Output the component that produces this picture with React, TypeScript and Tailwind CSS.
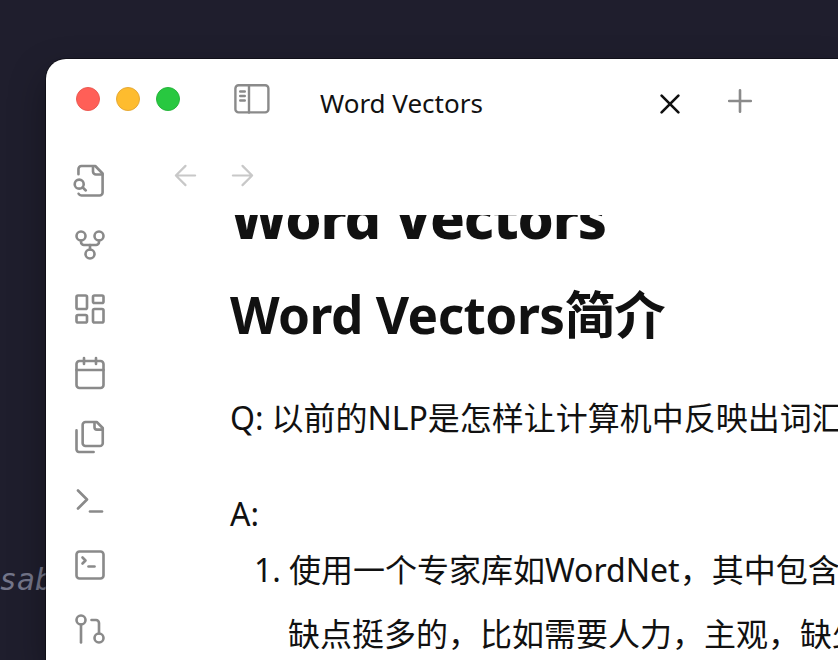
import React from "react";

type IconProps = { children: React.ReactNode; className?: string; size?: number; stroke?: number };

function Icon({ children, className = "", size = 36, stroke = 1.75 }: IconProps) {
  return (
    <svg
      width={size}
      height={size}
      viewBox="0 0 24 24"
      fill="none"
      stroke="currentColor"
      strokeWidth={stroke}
      strokeLinecap="round"
      strokeLinejoin="round"
      className={`shrink-0 ${className}`}
    >
      {children}
    </svg>
  );
}

const ribbon: React.ReactNode[] = [
  <>
    <path d="M4.3 7.5V4a2 2 0 0 1 2-2h9.2l4.9 5V19.7a2 2 0 0 1-2 2H6.3a2.2 2.2 0 0 1-1.9-1.2" />
    <path d="M14 2.2v3.5a2 2 0 0 0 2 2h4.3" />
    <circle cx="4.8" cy="14.1" r="3" />
    <path d="m9.2 18.3-2.2-2.1" />
  </>,
  <>
    <circle cx="12" cy="18" r="3" />
    <circle cx="6" cy="6" r="3" />
    <circle cx="18" cy="6" r="3" />
    <path d="M18 9v1a2 2 0 0 1-2 2H8a2 2 0 0 1-2-2V9" />
    <path d="M12 12v3" />
  </>,
  <>
    <rect x="3" y="3" width="7" height="9" rx="1" />
    <rect x="14" y="3" width="7" height="5" rx="1" />
    <rect x="14" y="12" width="7" height="9" rx="1" />
    <rect x="3" y="16" width="7" height="5" rx="1" />
  </>,
  <>
    <rect x="3" y="4" width="18" height="18" rx="2" />
    <path d="M16 2v4M8 2v4M3 10h18" />
  </>,
  <>
    <path d="M16.5 2H9a1.9 1.9 0 0 0-1.9 1.9v12.2A1.9 1.9 0 0 0 9 18h9.6a1.9 1.9 0 0 0 1.9-1.9V6L16.5 2z" />
    <path d="M3 7.6v12.8c0 .4.2.8.5 1.1.3.3.7.5 1.1.5h9.8" />
    <path d="M15 2.2v3.3a1.6 1.6 0 0 0 1.6 1.6h3.7" />
  </>,
  <>
    <path d="m4 17 6-6-6-6" />
    <path d="M12 19h8" />
  </>,
  <>
    <rect x="3" y="3" width="18" height="18" rx="2" />
    <path d="m7 11 2-2-2-2" />
    <path d="M11 13h4" />
  </>,
  <>
    <circle cx="18" cy="18" r="3" />
    <circle cx="6" cy="6" r="3" />
    <path d="M13 6h3a2 2 0 0 1 2 2v7" />
    <path d="M6 9v12" />
  </>,
];

export default function App() {
  return (
    <div className="relative flex h-[660px] w-[838px] overflow-hidden bg-[#1f1e2d] pl-[46px] pt-[59px] font-['Noto_Sans','Noto_Sans_CJK_SC',sans-serif] text-[#111111]">
      <span className="absolute -left-px top-[562px] font-['DejaVu_Sans_Mono',monospace] text-[30px] italic leading-[36px] text-[#74768a]">
        sab
      </span>
      <div className="relative flex w-[792px] shrink-0 flex-col overflow-hidden rounded-tl-[20px] bg-white shadow-[0_0_0_1px_rgba(0,0,0,0.4),0_16px_36px_rgba(0,0,0,0.35)]">
        <header className="flex h-[90px] shrink-0 items-start">
          <div className="ml-[30px] mt-7 flex gap-4">
            <i className="size-6 rounded-full border border-[#ec5a52] bg-[#ff5f57]" />
            <i className="size-6 rounded-full border border-[#e6a935] bg-[#febc2e]" />
            <i className="size-6 rounded-full border border-[#27b53c] bg-[#28c840]" />
          </div>
          <svg width="36" height="30" viewBox="0 0 36 30" fill="none" stroke="#8a8a8a" strokeWidth="2.4" strokeLinecap="round" className="ml-[54px] mt-[25px] shrink-0">
            <rect x="1.4" y="1.2" width="33" height="27.2" rx="3.2" />
            <path d="M15 1.5v27M6.2 7.5h4.6M6.2 12h4.6M6.2 16.5h4.6" />
          </svg>
          <h1 className="ml-[50px] mt-[26px] w-[330px] whitespace-nowrap text-[26px] leading-9">Word Vectors</h1>
          <Icon size={32} stroke={2} className="ml-1 mt-[29px] text-[#111111]">
            <path d="m5.7 5.7 12.6 12.6M18.3 5.7 5.7 18.3" />
          </Icon>
          <Icon size={36} stroke={1.75} className="ml-9 mt-6 text-[#8a8a8a]">
            <path d="M12 4.8v14.4M4.8 12h14.4" />
          </Icon>
        </header>
        <div className="flex min-h-0 flex-1">
          <nav className="flex w-[88px] shrink-0 flex-col items-center gap-7 pt-[14px] text-[#8a8a8a]">
            {ribbon.map((drawing, i) => (
              <Icon key={i}>{drawing}</Icon>
            ))}
          </nav>
          <main className="flex min-w-0 flex-1 flex-col">
            <div className="flex h-[66px] shrink-0 gap-6 pl-[35px] pt-[10px] text-[#c8c8c8]">
              <Icon size={33} stroke={1.6}>
                <path d="M19 12H5M12 19l-7-7 7-7" />
              </Icon>
              <Icon size={33} stroke={1.6}>
                <path d="M5 12h14M12 5l7 7-7 7" />
              </Icon>
            </div>
            <article className="min-h-0 flex-1 overflow-hidden whitespace-nowrap pl-24 text-[32px]">
              <h2 className="-mt-[36px] text-[57.7px] font-extrabold leading-[76px] tracking-[-0.021em]">Word Vectors</h2>
              <h3 className="mt-[21px] text-[51.3px] font-bold leading-[76px] tracking-[-0.01em]">
                Word Vectors<span className="tracking-[-0.03em]">简介</span>
              </h3>
              <p className="mt-[34px] leading-[64px] [word-spacing:-0.5px]">Q: 以前的NLP是怎样让计算机中反映出词汇</p>
              <p className="mt-8 leading-[64px]">A:</p>
              <div className="-mt-2 flex leading-[64px]">
                <span className="ml-6 w-[34px] shrink-0">1.</span>
                <p>
                  <span className="ml-px">使用一个专家库如WordNet，其中包含</span>
                  <br />
                  缺点挺多的，比如需要人力，主观，缺少
                </p>
              </div>
            </article>
          </main>
        </div>
      </div>
    </div>
  );
}
